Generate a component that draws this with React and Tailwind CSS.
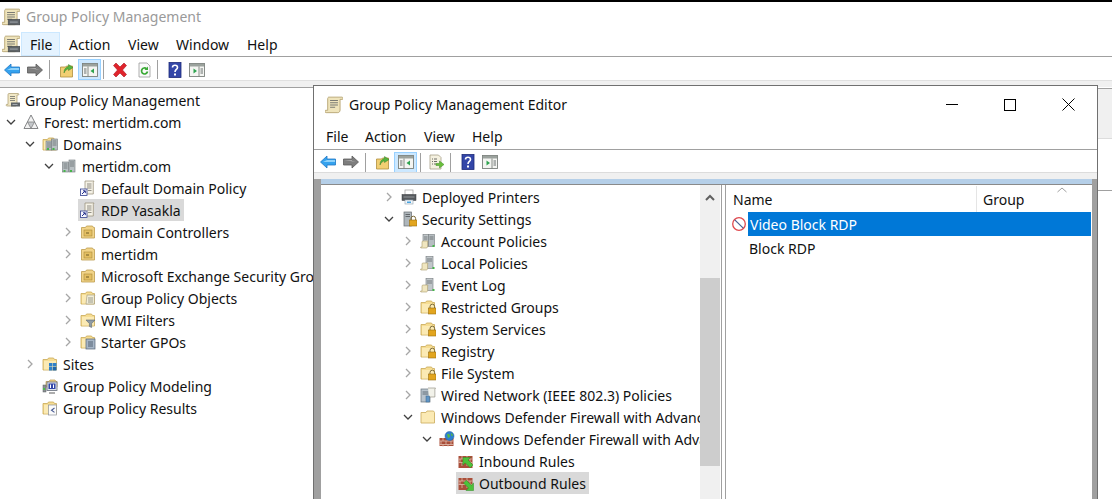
import React from "react";

const Svg = ({ size = 16, children }) => (
  <svg width={size} height={size} viewBox="0 0 16 16" className="shrink-0 block">
    {children}
  </svg>
);

const ChevronRight = () => (
  <svg width="8" height="10" viewBox="0 0 8 10" className="block">
    <path d="M2 1l4 4-4 4" fill="none" stroke="#a6a6a6" strokeWidth="1.3" />
  </svg>
);

const ChevronDown = () => (
  <svg width="10" height="8" viewBox="0 0 10 8" className="block">
    <path d="M1 2l4 4 4-4" fill="none" stroke="#404040" strokeWidth="1.3" />
  </svg>
);

const FolderBase = () => (
  <>
    <path d="M1 3.500h4.500l1-1.500h5l1 1.500h2V14H1z" fill="#f6dd93" stroke="#c9a857" strokeWidth="0.8" />
    <path d="M2 5h12v8.500H2z" fill="#fbeab4" />
  </>
);

const Lock = () => (
  <>
    <path d="M10 9V7.500a2.300 2.300 0 014.600 0V9" fill="none" stroke="#7a6a3a" strokeWidth="1" />
    <rect x="8.500" y="9" width="7.500" height="6" fill="#e2a51f" stroke="#9a6f12" strokeWidth="0.6" />
  </>
);

const GpmScroll = ({ server }) => (
  <Svg size={18}>
    <path d="M3.500 1H15c1 0 1.200 1 .6 2h-2.200v9.500c0 1.200-.8 2.300-2 2.300H1c-1 0-1.200-1-.6-2.100h2V2.400C2.400 1.600 2.800 1 3.500 1z" fill="#efe4bb" stroke="#b5a473" strokeWidth="0.8" />
    <path d="M4.500 4H11.500M4.500 6H11.500M4.500 8H11.500M4.500 10H9" stroke="#7b7b74" strokeWidth="0.9" />
    {server && <rect x="5.500" y="10" width="10.500" height="5" fill="#5f6468" stroke="#3f4346" strokeWidth="0.5" />}
    {server && <path d="M7 12.500h7" stroke="#a9b0b5" strokeWidth="0.8" />}
  </Svg>
);

const TreeScroll = () => (
  <Svg>
    <path d="M4 1.500h9c.8 0 1 .8.6 1.500H12v9c0 1-.6 2-1.700 2H2c-.8 0-1-.8-.6-1.600H3V2.600c0-.6.4-1.100 1-1.100z" fill="#f1e8c6" stroke="#a99a6c" strokeWidth="0.7" />
    <path d="M5 4.500h5M5 6.500h5M5 8.500h5" stroke="#6f6f6a" strokeWidth="0.8" />
    <rect x="6" y="10.500" width="9" height="4" fill="#5f6468" />
    <path d="M7.500 12.500h5" stroke="#b6bcc0" strokeWidth="0.8" />
  </Svg>
);

const ForestIcon = () => (
  <Svg>
    <path d="M8 1l7 13.500H1z" fill="#f2f2f2" stroke="#77787a" strokeWidth="0.9" />
    <path d="M4.500 8h7L8 14.500z" fill="#c4c7ca" stroke="#77787a" strokeWidth="0.7" />
  </Svg>
);

const Tower = ({ x, y = 3, h = 11 }) => (
  <>
    <rect x={x} y={y} width="6" height={h} fill="#b9c0c4" stroke="#71777b" strokeWidth="0.6" />
    <path d={`M${x + 1} ${y + 2}h4M${x + 1} ${y + 4}h4M${x + 1} ${y + 6}h4`} stroke="#5b6164" strokeWidth="0.7" />
    <rect x={x + 1} y={y + h - 2} width="2" height="2" fill="#45b649" />
  </>
);

const DomainsIcon = () => (
  <Svg>
    <FolderBase />
    <Tower x={4} y={5} h={9} />
    <Tower x={9.5} y={3} h={11} />
  </Svg>
);

const DomainIcon = () => (
  <Svg>
    <Tower x={1.5} y={4} h={10} />
    <Tower x={8} y={2} h={12} />
  </Svg>
);

const GpoLink = () => (
  <Svg>
    <path d="M5 1h9l-.7 1.500V14H5z" fill="#f5f2e6" stroke="#938b72" strokeWidth="0.7" />
    <path d="M7 4h4.500M7 6h4.500M7 8h4.500M8 10.500h3.500" stroke="#77756c" strokeWidth="0.8" />
    <rect x="0.500" y="9" width="6.500" height="6.500" fill="#f7f7ff" stroke="#33408f" strokeWidth="0.8" />
    <path d="M2 14l3-3M3 10.800h2.300v2.300" fill="none" stroke="#24308a" strokeWidth="1" />
  </Svg>
);

const OuIcon = () => (
  <Svg>
    <path d="M1.500 3.500h4l1-1.500h6l1 1.500h1V14h-13z" fill="#f2d488" stroke="#bd9c4e" strokeWidth="0.8" />
    <rect x="4" y="6" width="8" height="6" fill="#e4bf63" stroke="#a88939" strokeWidth="0.6" />
    <path d="M6 9h3" stroke="#6f5b24" strokeWidth="1" />
  </Svg>
);

const GpoFolder = () => (
  <Svg>
    <FolderBase />
    <path d="M7 5h8l-.6 1v8H6z" fill="#f2eed9" stroke="#9c9477" strokeWidth="0.6" />
    <path d="M8 8h5M8 10h5M8 12h5" stroke="#77756c" strokeWidth="0.7" />
  </Svg>
);

const WmiFolder = () => (
  <Svg>
    <FolderBase />
    <path d="M6 8h9l-3.400 3.600V15.500l-2.200-1v-2.900z" fill="#8f9ba3" stroke="#5f6a72" strokeWidth="0.6" />
  </Svg>
);

const StarterFolder = () => (
  <Svg>
    <FolderBase />
    <rect x="6" y="5" width="9" height="10" fill="#a7b6c7" stroke="#566577" strokeWidth="0.7" />
    <path d="M8 8h5M8 10h5M8 12h5" stroke="#3f4e60" strokeWidth="0.8" />
  </Svg>
);

const SitesFolder = () => (
  <Svg>
    <FolderBase />
    <rect x="7" y="7" width="3.500" height="3.500" fill="#2f80c9" />
    <rect x="11" y="7" width="3.500" height="3.500" fill="#2f80c9" />
    <rect x="7" y="11" width="3.500" height="3.500" fill="#2f80c9" />
    <rect x="11" y="11" width="3.500" height="3.500" fill="#1f67ab" />
  </Svg>
);

const ModelingIcon = () => (
  <Svg>
    <path d="M4 3.500h3l1-1.500h5l1 1.500h1V9H4z" fill="#f2d488" stroke="#bd9c4e" strokeWidth="0.7" />
    <rect x="5" y="4" width="10" height="8.500" fill="#dfe3ea" stroke="#666d7a" strokeWidth="0.8" />
    <rect x="6.500" y="5.500" width="7" height="5.500" fill="#3447a8" />
    <path d="M8.500 6.500v3.500M11.500 6.500v3.500" stroke="#fff" strokeWidth="1" />
    <rect x="1" y="7" width="3" height="7" fill="#8b9093" stroke="#5c6063" strokeWidth="0.5" />
    <rect x="1" y="10" width="2" height="2" fill="#4cbb4c" />
    <path d="M7 15h6" stroke="#777" strokeWidth="1.200" />
  </Svg>
);

const ResultsFolder = () => (
  <Svg>
    <FolderBase />
    <rect x="6.500" y="5" width="8" height="10" fill="#fbfbfb" stroke="#8a8f98" strokeWidth="0.7" />
    <path d="M12.500 8l-3 2.200 3 2.200" fill="none" stroke="#4a5c94" strokeWidth="1.100" />
  </Svg>
);

const PrinterIcon = () => (
  <Svg>
    <rect x="4" y="1" width="8" height="5" fill="#fff" stroke="#9a9a9a" strokeWidth="0.7" />
    <rect x="1" y="5.500" width="14" height="6" fill="#55595d" stroke="#3a3d40" strokeWidth="0.5" />
    <path d="M2.500 8h11" stroke="#a6abaf" strokeWidth="0.8" />
    <rect x="4" y="11" width="8" height="4" fill="#f4f7fa" stroke="#8da0b0" strokeWidth="0.6" />
    <rect x="6" y="12.500" width="4" height="1.500" fill="#4aa3df" />
  </Svg>
);

const SecurityIcon = () => (
  <Svg>
    <rect x="3" y="1" width="7.500" height="14" fill="#aeb6bb" stroke="#666c70" strokeWidth="0.7" />
    <path d="M4.500 3.500h4.500M4.500 5.500h4.500" stroke="#4c5256" strokeWidth="0.8" />
    <Lock />
  </Svg>
);

const PolicyServer = ({ wide }) => (
  <Svg>
    {wide && <rect x="8.500" y="1.500" width="6" height="12" fill="#b6bdc1" stroke="#747a7e" strokeWidth="0.6" />}
    {wide && <path d="M9.500 4h4M9.500 6h4" stroke="#565c60" strokeWidth="0.7" />}
    <rect x={wide ? 3 : 6} y="1.500" width={wide ? 5.5 : 7} height="12" fill="#c1c7ca" stroke="#747a7e" strokeWidth="0.6" />
    <path d={wide ? "M4 4h3.500M4 6h3.500" : "M7 4h5M7 6h5"} stroke="#565c60" strokeWidth="0.7" />
    <path d="M3 8h5l-.4 1v4.500c0 .8-.6 1.500-1.400 1.500H1c-.5 0-.7-.6-.4-1H2V9c0-.5.4-1 1-1z" fill="#f0e6bf" stroke="#a99a6c" strokeWidth="0.6" />
    <rect x="12.500" y="12" width="2" height="2" fill="#45b649" />
  </Svg>
);

const LockFolder = () => (
  <Svg>
    <FolderBase />
    <Lock />
  </Svg>
);

const WiredIcon = () => (
  <Svg>
    <rect x="1" y="2" width="9" height="13" fill="#b8c3cd" stroke="#66727c" strokeWidth="0.7" />
    <path d="M2.500 5h6M2.500 7h6" stroke="#4d5963" strokeWidth="0.8" />
    <path d="M8 1h7.500l-.6 1.200V10H9" fill="#f2f2ea" stroke="#878377" strokeWidth="0.6" />
    <rect x="6" y="9" width="3.500" height="6" fill="#5f95c6" stroke="#39648d" strokeWidth="0.5" />
  </Svg>
);

const PlainFolder = () => (
  <Svg>
    <path d="M1 3.500h5l1-1.500h6.500l1 1.500V14H1z" fill="#fbeab4" stroke="#cfb266" strokeWidth="0.9" />
  </Svg>
);

const Bricks = ({ y = 5 }) => (
  <>
    <rect x="0.500" y={y} width="14" height={15 - y} fill="#a94f3a" />
    <path d={`M.5 ${y + 3}h14M.5 ${y + 6.5}h14M4 ${y}v3M9 ${y}v3M2 ${y + 3}v3.500M7 ${y + 3}v3.500M12 ${y + 3}v3.500M4 ${y + 6.5}v3.500M9 ${y + 6.5}v3.500`} stroke="#e8c8ba" strokeWidth="0.7" />
  </>
);

const FirewallIcon = () => (
  <Svg>
    <Bricks y={7} />
    <circle cx="10.500" cy="5" r="4.500" fill="#2f7fd0" stroke="#1e5c9e" strokeWidth="0.5" />
    <path d="M8 3.500c1.500-1 2.500 0 3 1s-1 2.500-2 2.500zM12 2c1 .5 2 1.500 2 3l-2-.5z" fill="#54b848" />
  </Svg>
);

const InboundIcon = () => (
  <Svg>
    <Bricks y={3} />
    <path d="M5 4.500h7.500L10 7l5 5-2.800 2.800-5-5L4.800 12.200z" fill="#4cc23a" stroke="#2f8a22" strokeWidth="0.5" />
  </Svg>
);

const OutboundIcon = () => (
  <Svg>
    <Bricks y={3} />
    <path d="M15.500 15.500H8l2.500-2.500-5-5L8.300 5.200l5 5 2.200-2.200z" fill="#4cc23a" stroke="#2f8a22" strokeWidth="0.5" />
  </Svg>
);

const ConnectionIcon = () => (
  <Svg>
    <rect x="1" y="2" width="5" height="6" fill="#3f6fd8" />
    <rect x="6" y="3" width="8" height="11" fill="#f2f2f2" stroke="#8a8a8a" strokeWidth="0.6" />
  </Svg>
);

const BlockIcon = () => (
  <Svg>
    <circle cx="8" cy="8" r="6.300" fill="#fff" stroke="#e0484d" strokeWidth="1.300" />
    <path d="M3.800 3.800l8.400 8.400" stroke="#4b5f94" strokeWidth="1.200" />
  </Svg>
);

/* toolbar icons */
const BackIcon = () => (
  <Svg>
    <path d="M.5 8L7 2v3h8.500v6H7v3z" fill="#35a2ee" stroke="#1f77c4" strokeWidth="0.8" />
    <path d="M7 6h8v2H3z" fill="#8fd2fa" />
  </Svg>
);

const ForwardIcon = () => (
  <Svg>
    <path d="M15.500 8L9 2v3H.5v6H9v3z" fill="#7d7d7d" stroke="#5b5b5b" strokeWidth="0.8" />
    <path d="M1 6h8v2h4z" fill="#a9a9a9" />
  </Svg>
);

const UpFolderIcon = () => (
  <Svg>
    <path d="M1.500 5h5l1-1h6v11h-12z" fill="#f2cf73" stroke="#b08f3e" strokeWidth="0.8" />
    <path d="M5 11c0-4 2-6 4.500-6.500V2.500L14 5.500l-4.500 3V6.800C8 7 6 8.500 5 11z" fill="#55b53f" stroke="#38832a" strokeWidth="0.5" />
  </Svg>
);

const PaneIcon = ({ side }) => (
  <Svg>
    <rect x="0.500" y="1.500" width="15" height="13" fill="#f4f5f2" stroke="#7b817c" strokeWidth="0.9" />
    <rect x="1" y="2" width="14" height="2.500" fill="#9ba29d" />
    <path d={side === "left" ? "M6 4.500v10" : "M10 4.500v10"} stroke="#7b817c" strokeWidth="0.9" />
    {side === "left" ? (
      <>
        <path d="M2 7h2.500M2 9h2.500M2 11h2.500" stroke="#5a6360" strokeWidth="0.9" />
        <path d="M12 6.500v5L8.500 9z" fill="#2ea44f" />
      </>
    ) : (
      <>
        <path d="M11.500 7H14M11.500 9H14M11.500 11H14" stroke="#5a6360" strokeWidth="0.9" />
        <path d="M4.500 6.500v5L8 9z" fill="#2ea44f" />
      </>
    )}
  </Svg>
);

const DeleteIcon = () => (
  <Svg>
    <path d="M1.500 3.500l2.500-2.500L8 5l4-4 2.500 2.500L10.500 8l4 4.500L12 15l-4-4-4 4-2.500-2.500L5.500 8z" fill="#e0232c" stroke="#aa1820" strokeWidth="0.6" />
  </Svg>
);

const RefreshIcon = () => (
  <Svg>
    <path d="M2 1h8l3 3v11H2z" fill="#fafafa" stroke="#9a9a9a" strokeWidth="0.8" />
    <path d="M10.500 9.500a3 3 0 11-1-2.800" fill="none" stroke="#3aa935" strokeWidth="1.700" />
    <path d="M11 4.500v3.500H7.500z" fill="#3aa935" />
  </Svg>
);

const HelpIcon = () => (
  <Svg>
    <rect x="2" y="0.500" width="12" height="15" fill="#3346a8" stroke="#1d2a78" strokeWidth="0.8" />
    <path d="M5.500 5.500c0-3 5-3 5 0 0 2-2.500 2-2.500 4.500" fill="none" stroke="#fff" strokeWidth="1.600" />
    <rect x="7" y="11.500" width="2" height="2" fill="#fff" />
  </Svg>
);

const ExportIcon = () => (
  <Svg>
    <path d="M2 1h8.500l2.500 2.500V15H2z" fill="#f5f1e0" stroke="#9b9478" strokeWidth="0.7" />
    <path d="M4 5h1M6 5h3M4 7.500h1M6 7.500h3M4 10h1M6 10h2" stroke="#5f5f5a" strokeWidth="0.9" />
    <path d="M8 9.500h3.500V7l4.500 3.500-4.500 3.500v-2.500H8z" fill="#6abf3c" stroke="#3f8a22" strokeWidth="0.5" />
  </Svg>
);

const levelClass = {
  1: "pl-[2px]",
  2: "pl-[21px]",
  3: "pl-[40px]",
  4: "pl-[59px]",
  5: "pl-[78px]",
  6: "pl-[97px]",
  7: "pl-[116px]",
};

const TreeRow = ({ level, open, closed, icon, label, selected }) => (
  <div className={`flex items-center h-[22px] whitespace-nowrap ${levelClass[level]}`}>
    <div className="w-[18px] flex justify-center shrink-0">
      {open && <ChevronDown />}
      {closed && <ChevronRight />}
    </div>
    <div className={`ml-[1px] flex items-center h-[22px] pl-[2px] pr-[3px] ${selected ? "bg-[#d9d9d9]" : ""}`}>
      {icon}
      <span className="ml-[5px]">{label}</span>
    </div>
  </div>
);

const Sep = ({ className }) => <div className={`w-px h-[19px] bg-[#a0a0a0] ${className}`} />;

const MenuBar = ({ items, first, textClass }) => (
  <div className="flex items-center h-full">
    {items.map(([name, width], i) => (
      <div
        key={name}
        className={`${width} h-[24px] flex items-center pl-[8px] border ${textClass} ${
          i === 0 && first ? "bg-[#e5f3ff] border-[#cce8ff]" : "border-transparent"
        }`}
      >
        {name}
      </div>
    ))}
  </div>
);

const leftRows = [
  { level: 1, open: true, icon: <ForestIcon />, label: "Forest: mertidm.com" },
  { level: 2, open: true, icon: <DomainsIcon />, label: "Domains" },
  { level: 3, open: true, icon: <DomainIcon />, label: "mertidm.com" },
  { level: 4, icon: <GpoLink />, label: "Default Domain Policy" },
  { level: 4, icon: <GpoLink />, label: "RDP Yasakla", selected: true },
  { level: 4, closed: true, icon: <OuIcon />, label: "Domain Controllers" },
  { level: 4, closed: true, icon: <OuIcon />, label: "mertidm" },
  { level: 4, closed: true, icon: <OuIcon />, label: "Microsoft Exchange Security Groups" },
  { level: 4, closed: true, icon: <GpoFolder />, label: "Group Policy Objects" },
  { level: 4, closed: true, icon: <WmiFolder />, label: "WMI Filters" },
  { level: 4, closed: true, icon: <StarterFolder />, label: "Starter GPOs" },
  { level: 2, closed: true, icon: <SitesFolder />, label: "Sites" },
  { level: 2, icon: <ModelingIcon />, label: "Group Policy Modeling" },
  { level: 2, icon: <ResultsFolder />, label: "Group Policy Results" },
];

const rightRows = [
  { level: 4, closed: true, icon: <PrinterIcon />, label: "Deployed Printers" },
  { level: 4, open: true, icon: <SecurityIcon />, label: "Security Settings" },
  { level: 5, closed: true, icon: <PolicyServer wide />, label: "Account Policies" },
  { level: 5, closed: true, icon: <PolicyServer />, label: "Local Policies" },
  { level: 5, closed: true, icon: <PolicyServer />, label: "Event Log" },
  { level: 5, closed: true, icon: <LockFolder />, label: "Restricted Groups" },
  { level: 5, closed: true, icon: <LockFolder />, label: "System Services" },
  { level: 5, closed: true, icon: <LockFolder />, label: "Registry" },
  { level: 5, closed: true, icon: <LockFolder />, label: "File System" },
  { level: 5, closed: true, icon: <WiredIcon />, label: "Wired Network (IEEE 802.3) Policies" },
  { level: 5, open: true, icon: <PlainFolder />, label: "Windows Defender Firewall with Advanced Security" },
  { level: 6, open: true, icon: <FirewallIcon />, label: "Windows Defender Firewall with Advanced Security - LDAP" },
  { level: 7, icon: <InboundIcon />, label: "Inbound Rules" },
  { level: 7, icon: <OutboundIcon />, label: "Outbound Rules", selected: true },
  { level: 7, icon: <ConnectionIcon />, label: "Connection Security Rules" },
];

const EditorWindow = () => (
  <div className="absolute left-[313px] top-[85px] w-[785px] h-[414px] bg-white border border-[#707070] border-b-0 flex flex-col">
    <div className="h-[39px] shrink-0 flex items-center pl-[11px] pb-[2px]">
      <GpmScroll />
      <span className="ml-[6px]">Group Policy Management Editor</span>
      <div className="ml-auto flex items-center">
        <div className="w-[58px] flex justify-center">
          <div className="w-[12px] h-px bg-black" />
        </div>
        <div className="w-[58px] flex justify-center">
          <div className="w-[12px] h-[12px] border border-black" />
        </div>
        <div className="w-[58px] flex justify-center">
          <svg width="13" height="13" viewBox="0 0 13 13" className="block">
            <path d="M.5.5l12 12M12.500.5l-12 12" stroke="#000" strokeWidth="1" />
          </svg>
        </div>
      </div>
    </div>
    <div className="h-[24px] shrink-0 pl-[3px]">
      <MenuBar
        textClass="pb-[2px]"
        items={[["File", "w-[39px]"], ["Action", "w-[59px]"], ["View", "w-[48px]"], ["Help", "w-[48px]"]]}
      />
    </div>
    <div className="h-[23px] shrink-0 border-t border-[#a0a0a0] flex items-center pl-[6px] pt-[2px]">
      <BackIcon />
      <div className="ml-[7px]"><ForwardIcon /></div>
      <Sep className="ml-[6px]" />
      <div className="ml-[9px]"><UpFolderIcon /></div>
      <div className="ml-[3px] w-[23px] h-[21px] bg-[#cce8ff] border border-[#99d1ff] flex items-center justify-center">
        <PaneIcon side="left" />
      </div>
      <Sep className="ml-[3px]" />
      <div className="ml-[7px]"><ExportIcon /></div>
      <Sep className="ml-[6px]" />
      <div className="ml-[9px]"><HelpIcon /></div>
      <div className="ml-[6px]"><PaneIcon side="right" /></div>
    </div>
    <div className="h-[7px] shrink-0 bg-[#f0f0f0] border-t border-[#dcdcdc]" />
    <div className="flex-1 min-h-0 flex bg-[#a0a0a0] pl-[7px] pr-[5px]">
      <div className="flex-1 min-w-0 flex flex-col">
        <div className="h-[5px] shrink-0 bg-[#b5cfe8]" />
        <div className="flex-1 min-h-0 flex bg-white border-t border-[#8a8a8a]">
          <div className="w-[401px] shrink-0 flex overflow-hidden border-r border-[#a0a0a0]">
            <div className="w-[379px] shrink-0 pt-[1px] overflow-hidden">
              {rightRows.map((r) => (
                <TreeRow key={r.label} {...r} />
              ))}
            </div>
            <div className="w-[20px] shrink-0 bg-[#f0f0f0] flex flex-col">
              <div className="h-[93px] shrink-0 pt-[9px] flex justify-center">
                <svg width="10" height="7" viewBox="0 0 10 7" className="block">
                  <path d="M1 6l4-4 4 4" fill="none" stroke="#606060" strokeWidth="2" />
                </svg>
              </div>
              <div className="h-[188px] shrink-0 bg-[#cdcdcd]" />
            </div>
          </div>
          <div className="ml-[3px] flex-1 min-w-0 border-l border-[#a0a0a0] relative">
            <svg width="12" height="6" viewBox="0 0 12 6" className="absolute right-[24px] top-[2px]">
              <path d="M1.500 5L6 1l4.500 4" fill="none" stroke="#a0a0a0" strokeWidth="1" />
            </svg>
            <div className="flex h-[27px] pt-[1px]">
              <div className="w-[251px] flex items-center pl-[7px] border-r border-[#e5e5e5]">Name</div>
              <div className="flex-1 flex items-center pl-[6px]">Group</div>
            </div>
            <div className="flex items-center h-[24px] pl-[5px] pr-px">
              <BlockIcon />
              <div className="flex-1 h-[24px] ml-px bg-[#0078d7] text-white flex items-center pl-[2px]">Video Block RDP</div>
            </div>
            <div className="flex items-center h-[24px] pl-[23px]">Block RDP</div>
          </div>
        </div>
      </div>
    </div>
  </div>
);

export default function App() {
  return (
    <div className="relative w-[1112px] h-[499px] overflow-hidden bg-white text-[14px] text-[#111] font-['Noto_Sans',sans-serif] flex flex-col">
      <div className="h-[2px] shrink-0 bg-black" />
      <div className="h-[29px] shrink-0 flex items-center pl-[2px] text-[#9a9a9a]">
        <GpmScroll server />
        <span className="ml-[6px]">Group Policy Management</span>
      </div>
      <div className="h-[26px] shrink-0 flex items-center pl-[2px] border-b border-[#a0a0a0]">
        <GpmScroll server />
        <div className="ml-px">
          <MenuBar
            first
            textClass="pt-[2px]"
            items={[["File", "w-[39px]"], ["Action", "w-[59px]"], ["View", "w-[48px]"], ["Window", "w-[71px]"], ["Help", "w-[48px]"]]}
          />
        </div>
      </div>
      <div className="h-[23px] shrink-0 flex items-center pl-[4px] pt-[2px]">
        <BackIcon />
        <div className="ml-[7px]"><ForwardIcon /></div>
        <Sep className="ml-[6px]" />
        <div className="ml-[9px]"><UpFolderIcon /></div>
        <div className="ml-[3px] w-[23px] h-[21px] bg-[#cce8ff] border border-[#99d1ff] flex items-center justify-center">
          <PaneIcon side="left" />
        </div>
        <Sep className="ml-[2px]" />
        <div className="ml-[8px]"><DeleteIcon /></div>
        <div className="ml-[9px]"><RefreshIcon /></div>
        <Sep className="ml-[4px]" />
        <div className="ml-[9px]"><HelpIcon /></div>
        <div className="ml-[6px]"><PaneIcon side="right" /></div>
      </div>
      <div className="h-[7px] shrink-0 bg-[#f0f0f0] border-t border-[#e0e0e0]" />
      <div className="flex-1 min-h-0 flex">
        <div className="w-[313px] shrink-0 overflow-hidden border-t border-[#a0a0a0] pt-[1px]">
          <div className="flex items-center h-[22px] whitespace-nowrap pl-[5px]">
            <TreeScroll />
            <span className="ml-[4px]">Group Policy Management</span>
          </div>
          {leftRows.map((r) => (
            <TreeRow key={r.label} {...r} />
          ))}
        </div>
        <div className="flex-1 flex flex-col">
          <div className="h-[51px] bg-[#f0f0f0] border-t border-b border-t-[#a0a0a0] border-b-[#dcdcdc] mt-px" />
          <div className="h-[52px] border-b border-[#a0a0a0]" />
        </div>
      </div>
      <EditorWindow />
    </div>
  );
}
